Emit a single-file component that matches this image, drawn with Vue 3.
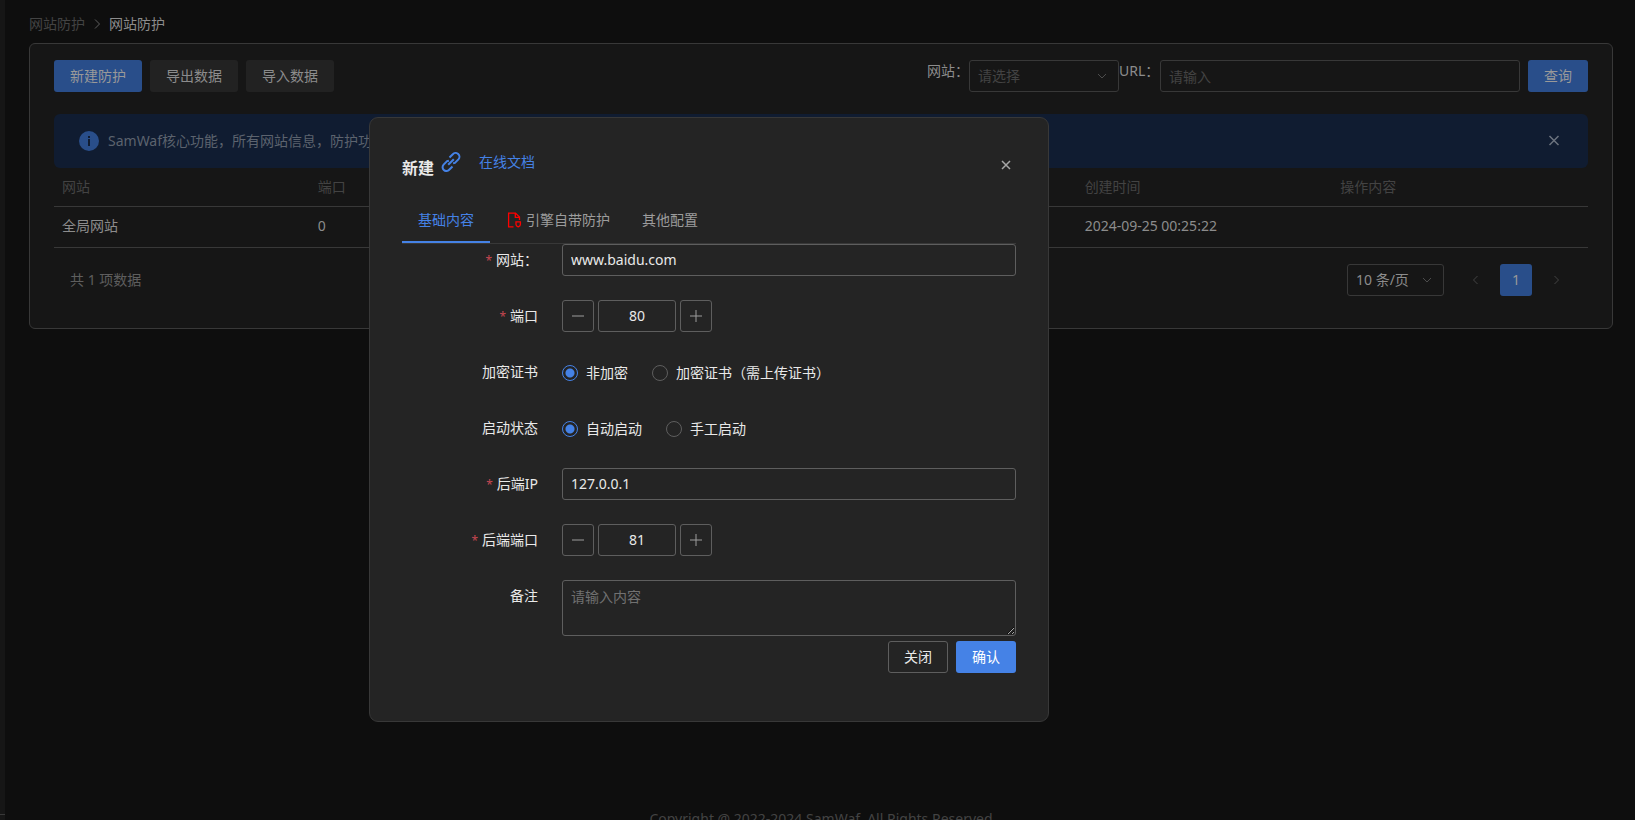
<script setup>
import { ref } from 'vue'

const columns = ['网站', '端口', '', '', '创建时间', '操作内容']
const rows = [['全局网站', '0', '', '', '2024-09-25 00:25:22', '']]

const form = ref({
  host: 'www.baidu.com',
  port: '80',
  ssl: '0',
  start: '0',
  remoteIp: '127.0.0.1',
  remotePort: '81',
  remarks: ''
})

function step(key, delta) {
  form.value[key] = String(Number(form.value[key]) + delta)
}
</script>

<template>
  <div class="app">
    <aside class="side"><div class="side-foot"></div></aside>

    <div class="main">
      <nav class="crumbs">
        <a href="#" class="crumb">网站防护</a>
        <svg class="crumb-sep" viewBox="0 0 16 16"><path d="M6 3.5 10.5 8 6 12.5" /></svg>
        <span class="crumb current">网站防护</span>
      </nav>

      <section class="card">
        <div class="toolbar">
          <div class="actions">
            <button class="btn primary">新建防护</button>
            <button class="btn">导出数据</button>
            <button class="btn">导入数据</button>
          </div>
          <div class="search">
            <label for="q-site">网站：</label>
            <div class="select-box site">
              <select id="q-site" class="placeholder"><option>请选择</option></select>
              <svg class="chevron" viewBox="0 0 16 16"><path d="M4 6 8 10 12 6" /></svg>
            </div>
            <label for="q-url" class="url-label">URL：</label>
            <input id="q-url" class="field" placeholder="请输入" />
            <button class="btn primary query">查询</button>
          </div>
        </div>

        <div class="alert">
          <svg class="info" viewBox="0 0 20 20">
            <circle cx="10" cy="10" r="10" />
            <path d="M9 5h2v2H9zM9 8h2v7H9z" />
          </svg>
          <p>SamWaf核心功能，所有网站信息，防护功能</p>
          <button class="icon-btn" aria-label="关闭">
            <svg viewBox="0 0 16 16"><path d="M3.5 3l9 9M12.5 3l-9 9" /></svg>
          </button>
        </div>

        <table>
          <thead>
            <tr><th v-for="(c, i) in columns" :key="i">{{ c }}</th></tr>
          </thead>
          <tbody>
            <tr v-for="(r, i) in rows" :key="i">
              <td v-for="(c, j) in r" :key="j">{{ c }}</td>
            </tr>
          </tbody>
        </table>

        <div class="pager">
          <span class="total">共 1 项数据</span>
          <div class="select-box size">
            <select aria-label="10 条/页"><option>10 条/页</option></select>
            <svg class="chevron" viewBox="0 0 16 16"><path d="M4 6 8 10 12 6" /></svg>
          </div>
          <div class="pages">
            <button class="page" aria-label="上一页">
              <svg viewBox="0 0 16 16"><path d="M9.5 4 5.5 8l4 4" /></svg>
            </button>
            <button class="page on">1</button>
            <button class="page" aria-label="下一页">
              <svg viewBox="0 0 16 16"><path d="M6.5 4l4 4-4 4" /></svg>
            </button>
          </div>
        </div>
      </section>

      <footer>Copyright @ 2022-2024 SamWaf. All Rights Reserved</footer>
    </div>

    <div class="overlay">
      <div class="dialog" role="dialog" aria-labelledby="dlg-title">
        <header>
          <h2 id="dlg-title">新建</h2>
          <svg class="link-icon" viewBox="0 0 20 20">
            <path d="M8.5 5.5l3.3-3.3a3.7 3.7 0 0 1 5.6 5.2l-3.5 3.5-1.8.4" />
            <path d="M11.5 14.5l-3.3 3.3a3.7 3.7 0 0 1-5.6-5.2l3.5-3.5 1.8-.4" />
            <path d="M7.2 12.8l5.6-5.6" />
          </svg>
          <a href="#" class="doc">在线文档</a>
          <button class="icon-btn close" aria-label="关闭">
            <svg viewBox="0 0 16 16"><path d="M4 5l8 8M12 5l-8 8" /></svg>
          </button>
        </header>

        <div class="tabs" role="tablist">
          <button class="tab active" role="tab">基础内容</button>
          <button class="tab" role="tab">
            <svg class="file-icon" viewBox="0 0 16 16">
              <path d="M7.5 14.9H2.6V1.1h6.9l4 4V8" />
              <path d="M9.3 1.1v4.2h4.2" />
              <path d="M10 9.9h4.4v2.5c0 1.1-.8 1.8-2.2 2.4-1.4-.6-2.2-1.3-2.2-2.4z" />
            </svg>
            引擎自带防护
          </button>
          <button class="tab" role="tab">其他配置</button>
        </div>

        <form @submit.prevent>
          <div class="item">
            <label class="name required" for="f-host">网站：</label>
            <input id="f-host" v-model="form.host" class="field" />
          </div>
          <div class="item">
            <label class="name required" for="f-port">端口</label>
            <div class="number">
              <button type="button" aria-label="减少" @click="step('port', -1)"><svg viewBox="0 0 16 16"><path d="M2 8h12" /></svg></button>
              <input id="f-port" v-model="form.port" class="field" />
              <button type="button" aria-label="增加" @click="step('port', 1)"><svg viewBox="0 0 16 16"><path d="M2 8h12M8 2v12" /></svg></button>
            </div>
          </div>
          <div class="item" role="radiogroup" aria-labelledby="l-ssl">
            <span id="l-ssl" class="name">加密证书</span>
            <div class="radios">
              <label><input v-model="form.ssl" type="radio" name="ssl" value="0" />非加密</label>
              <label><input v-model="form.ssl" type="radio" name="ssl" value="1" />加密证书（需上传证书）</label>
            </div>
          </div>
          <div class="item" role="radiogroup" aria-labelledby="l-start">
            <span id="l-start" class="name">启动状态</span>
            <div class="radios">
              <label><input v-model="form.start" type="radio" name="start" value="0" />自动启动</label>
              <label><input v-model="form.start" type="radio" name="start" value="1" />手工启动</label>
            </div>
          </div>
          <div class="item">
            <label class="name required" for="f-ip">后端IP</label>
            <input id="f-ip" v-model="form.remoteIp" class="field" />
          </div>
          <div class="item">
            <label class="name required" for="f-rport">后端端口</label>
            <div class="number">
              <button type="button" aria-label="减少" @click="step('remotePort', -1)"><svg viewBox="0 0 16 16"><path d="M2 8h12" /></svg></button>
              <input id="f-rport" v-model="form.remotePort" class="field" />
              <button type="button" aria-label="增加" @click="step('remotePort', 1)"><svg viewBox="0 0 16 16"><path d="M2 8h12M8 2v12" /></svg></button>
            </div>
          </div>
          <div class="item">
            <label class="name" for="f-note">备注</label>
            <textarea id="f-note" v-model="form.remarks" class="field" placeholder="请输入内容"></textarea>
          </div>
          <div class="buttons">
            <button type="button" class="btn outline">关闭</button>
            <button type="submit" class="btn confirm">确认</button>
          </div>
        </form>
      </div>
    </div>
  </div>
</template>

<style>
body {
  background: #0e0e0e;
}
</style>

<style scoped>
.app,
.app * {
  box-sizing: border-box;
}
.app {
  display: flex;
  height: 100vh;
  overflow: hidden;
  color: #8c8c8c;
  font: 14px/22px "Noto Sans", "Noto Sans CJK SC", sans-serif;
}
button,
input,
select,
textarea {
  margin: 0;
  font: inherit;
  color: inherit;
  outline: none;
}
button {
  padding: 0;
  border: 0;
  background: none;
  cursor: pointer;
}
svg {
  display: block;
  flex: none;
  width: 16px;
  height: 16px;
  fill: none;
  stroke: currentColor;
}
a {
  text-decoration: none;
}
.side {
  display: flex;
  flex-direction: column;
  justify-content: flex-end;
  flex: none;
  width: 5px;
  background: #161616;
}
.side-foot {
  height: 6px;
  border-top: 1px solid #383838;
}
.main {
  display: flex;
  flex-direction: column;
  flex: 1;
  min-width: 0;
  height: calc(100vh + 34px);
  padding: 12px 22px 24px 24px;
}
.crumbs {
  display: flex;
  align-items: center;
  height: 24px;
  margin-bottom: 7px;
}
.crumb {
  color: #434343;
}
.crumb.current {
  color: #8c8c8c;
}
.crumb-sep {
  margin: 0 4px;
  color: #5e5e5e;
}
.card {
  padding: 16px 24px 32px;
  border: 1px solid #383838;
  border-radius: 6px;
  background: #161616;
}
.toolbar {
  display: flex;
  justify-content: space-between;
  margin-bottom: 22px;
}
.actions {
  display: flex;
  gap: 8px;
}
.btn {
  height: 32px;
  padding: 0 16px;
  border-radius: 3px;
  background: #222222;
  white-space: nowrap;
}
.btn.primary {
  background: #294e8a;
  color: #999999;
}
.search {
  display: flex;
  align-items: flex-start;
}
.search label {
  white-space: nowrap;
}
.search .url-label {
  width: 41px;
}
.search .field {
  width: 360px;
}
.query {
  margin-left: 8px;
}
.field {
  width: 100%;
  height: 32px;
  padding: 0 8px;
  border: 1px solid #383838;
  border-radius: 3px;
  background: transparent;
}
.field::placeholder {
  color: #434343;
  opacity: 1;
}
.select-box {
  display: grid;
  align-items: center;
}
.select-box > * {
  grid-area: 1 / 1;
}
.select-box select {
  width: 100%;
  height: 32px;
  padding: 0 8px;
  border: 1px solid #383838;
  border-radius: 3px;
  background: transparent;
  appearance: none;
}
.select-box .placeholder {
  color: #434343;
}
.select-box.site {
  width: 150px;
}
.select-box.size {
  width: 97px;
}
.chevron {
  justify-self: end;
  margin-right: 9px;
  color: #4c4c4c;
  pointer-events: none;
}
.alert {
  display: flex;
  align-items: center;
  gap: 9px;
  height: 54px;
  padding: 0 26px 0 25px;
  border-radius: 6px;
  background: #101c31;
  color: #5c636e;
}
.alert p {
  flex: 1;
  margin: 0;
}
.alert .icon-btn {
  color: #6c737e;
  stroke-width: 1.5;
}
.info {
  width: 20px;
  height: 20px;
  stroke: none;
  fill: #294e8a;
}
.info path {
  fill: #101c31;
}
table {
  width: 100%;
  table-layout: fixed;
  border-collapse: separate;
  border-spacing: 0;
}
th,
td {
  height: 41px;
  padding: 0 8px 2px;
  border-bottom: 1px solid #383838;
  text-align: left;
  font-weight: 400;
}
th {
  height: 39px;
  padding-bottom: 0;
  color: #434343;
}
.pager {
  display: flex;
  align-items: center;
  padding: 16px 16px 0;
}
.total {
  flex: 1;
  color: #5e5e5e;
}
.pages {
  display: flex;
  gap: 8px;
  margin-left: 16px;
}
.page {
  display: grid;
  place-items: center;
  width: 32px;
  height: 32px;
  border-radius: 3px;
  color: #434343;
}
.page.on {
  background: #294e8a;
  color: #999999;
}
footer {
  margin-top: auto;
  color: #434343;
  text-align: center;
}

.overlay {
  position: fixed;
  inset: 0;
  display: flex;
  align-items: flex-start;
  justify-content: center;
  padding: 117px 217px 0 0;
}
.dialog {
  width: 680px;
  padding: 30px 32px 48px;
  border: 1px solid #383838;
  border-radius: 9px;
  background: #242424;
  color: #e9e9e9;
}
header {
  display: flex;
  align-items: center;
  height: 32px;
  margin-bottom: 16px;
}
h2 {
  align-self: flex-end;
  margin: 0;
  font-size: 16px;
  line-height: 24px;
  font-weight: 600;
}
.link-icon {
  align-self: flex-start;
  width: 20px;
  height: 20px;
  margin: 4px 18px 0 7px;
  color: #4582e6;
  stroke-width: 2;
}
.doc {
  align-self: flex-start;
  margin-top: 3px;
  color: #4582e6;
}
.close {
  margin: 0 2px 0 auto;
  color: #a7a7a7;
  stroke-width: 1.5;
}
.tabs {
  display: flex;
  height: 48px;
  border-bottom: 1px solid #383838;
}
.tab {
  display: flex;
  align-items: center;
  gap: 4px;
  height: 47px;
  padding: 0 16px;
  border-top: 2px solid transparent;
  border-bottom: 2px solid transparent;
  color: #9c9c9c;
}
.tab.active {
  border-bottom-color: #4582e6;
  color: #4582e6;
}
.file-icon {
  color: #ff0000;
  stroke-width: 1.3;
}
.item {
  display: flex;
  align-items: flex-start;
  margin-bottom: 24px;
}
.name {
  flex: none;
  width: 160px;
  height: 32px;
  padding-right: 24px;
  line-height: 32px;
  text-align: right;
}
.required::before {
  content: "*";
  margin-right: 4px;
  color: #c64751;
  font-size: 12px;
  line-height: 1;
}
.dialog .field {
  border-color: #5e5e5e;
}
.dialog input.field {
  padding-bottom: 2px;
}
.dialog .field::placeholder {
  color: #717171;
}
.number {
  display: flex;
  gap: 4px;
}
.number .field {
  width: 78px;
  text-align: center;
}
.number button {
  display: grid;
  place-items: center;
  width: 32px;
  height: 32px;
  border: 1px solid #5e5e5e;
  border-radius: 3px;
  color: #9c9c9c;
}
.radios {
  display: flex;
  align-items: center;
  gap: 24px;
  height: 34px;
  margin-bottom: -2px;
}
.radios label {
  display: flex;
  align-items: center;
  gap: 8px;
}
.radios input {
  width: 16px;
  height: 16px;
  border: 1px solid #5e5e5e;
  border-radius: 50%;
  appearance: none;
}
.radios input:checked {
  border-color: #4582e6;
  background: radial-gradient(circle, #4582e6 4px, transparent 5px);
}
textarea.field {
  display: block;
  height: 56px;
  padding: 5px 8px;
  resize: vertical;
}
.buttons {
  display: flex;
  justify-content: flex-end;
  gap: 8px;
  margin-top: -19px;
}
.btn.outline {
  border: 1px solid #5e5e5e;
  padding: 0 15px;
  background: transparent;
}
.btn.confirm {
  background: #4582e6;
  color: #ffffff;
}
</style>
